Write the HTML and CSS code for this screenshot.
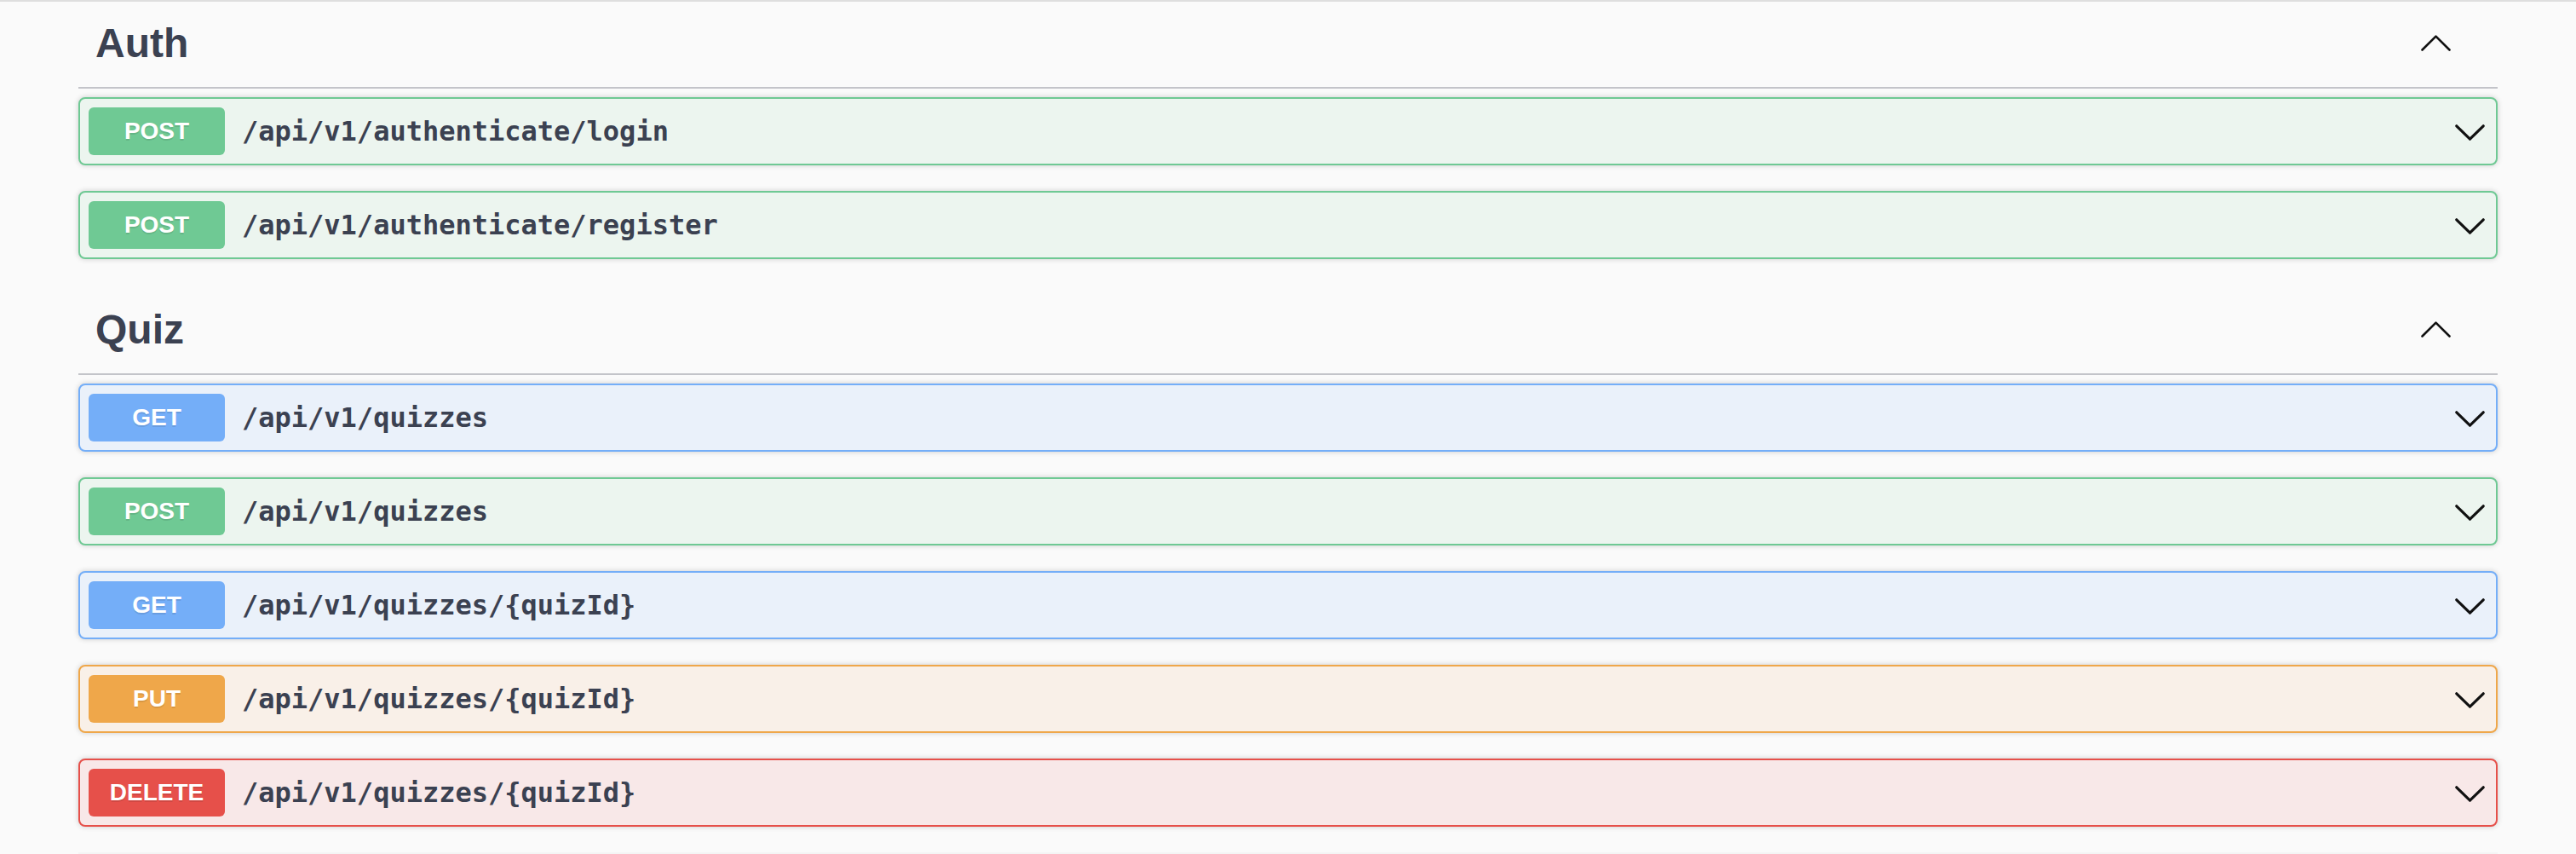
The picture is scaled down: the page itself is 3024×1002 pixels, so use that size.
FILE: index.html
```html
<!DOCTYPE html>
<html lang="en">
<head>
<meta charset="utf-8">
<title>API</title>
<link rel="stylesheet" href="styles.css">
</head>
<body>
<div class="wrapper">
  <section class="tag-section">
    <div class="tag tag-first">
      <h3 class="tag-title">Auth</h3>
      <svg class="tag-arrow" width="35" height="19" viewBox="0 0 35 19"><polyline points="1.5,17.5 17.5,1.6 33.5,17.5"/></svg>
    </div>
    <div class="ops">
      <div class="op op-post"><span class="method">POST</span><span class="path">/api/v1/authenticate/login</span><svg class="op-arrow" width="35" height="19" viewBox="0 0 35 19"><polyline points="1.8,1.8 17.5,17.2 33.2,1.8"/></svg></div>
      <div class="op op-post"><span class="method">POST</span><span class="path">/api/v1/authenticate/register</span><svg class="op-arrow" width="35" height="19" viewBox="0 0 35 19"><polyline points="1.8,1.8 17.5,17.2 33.2,1.8"/></svg></div>
    </div>
  </section>
  <section class="tag-section">
    <div class="tag">
      <h3 class="tag-title">Quiz</h3>
      <svg class="tag-arrow" width="35" height="19" viewBox="0 0 35 19"><polyline points="1.5,17.5 17.5,1.6 33.5,17.5"/></svg>
    </div>
    <div class="ops">
      <div class="op op-get"><span class="method">GET</span><span class="path">/api/v1/quizzes</span><svg class="op-arrow" width="35" height="19" viewBox="0 0 35 19"><polyline points="1.8,1.8 17.5,17.2 33.2,1.8"/></svg></div>
      <div class="op op-post"><span class="method">POST</span><span class="path">/api/v1/quizzes</span><svg class="op-arrow" width="35" height="19" viewBox="0 0 35 19"><polyline points="1.8,1.8 17.5,17.2 33.2,1.8"/></svg></div>
      <div class="op op-get"><span class="method">GET</span><span class="path">/api/v1/quizzes/{quizId}</span><svg class="op-arrow" width="35" height="19" viewBox="0 0 35 19"><polyline points="1.8,1.8 17.5,17.2 33.2,1.8"/></svg></div>
      <div class="op op-put"><span class="method">PUT</span><span class="path">/api/v1/quizzes/{quizId}</span><svg class="op-arrow" width="35" height="19" viewBox="0 0 35 19"><polyline points="1.8,1.8 17.5,17.2 33.2,1.8"/></svg></div>
      <div class="op op-delete"><span class="method">DELETE</span><span class="path">/api/v1/quizzes/{quizId}</span><svg class="op-arrow" width="35" height="19" viewBox="0 0 35 19"><polyline points="1.8,1.8 17.5,17.2 33.2,1.8"/></svg></div>
    </div>
  </section>
  <div class="next-block"></div>
</div>
</body>
</html>
```

FILE: styles.css
```css
html, body {
  margin: 0;
  padding: 0;
}
body {
  background: #fafafa;
  border-top: 2px solid #dedede;
  font-family: "Liberation Sans", Arial, sans-serif;
  color: #3b4151;
}
.wrapper {
  max-width: 2840px;
  margin: 0 auto;
}
.tag-section {
  display: flex;
  flex-direction: column;
}
.tag {
  display: flex;
  align-items: center;
  justify-content: space-between;
  height: 64px;
  padding: 20px 55px 20px 20px;
  border-bottom: 2px solid #c3c4c9;
  margin-bottom: 10px;
}
.tag-first {
  padding-top: 16px;
}
.tag-title {
  margin: 0;
  font-size: 48px;
  font-weight: 700;
  color: #3b4151;
  font-family: "Liberation Sans", Arial, sans-serif;
}
.tag-arrow polyline {
  fill: none;
  stroke: #111;
  stroke-width: 2.6;
  stroke-linecap: round;
  stroke-linejoin: round;
}
.ops {
  display: flex;
  flex-direction: column;
}
.op {
  display: flex;
  align-items: center;
  height: 56px;
  padding: 10px;
  border: 2px solid;
  border-radius: 8px;
  box-shadow: 0 0 6px rgba(0, 0, 0, 0.19);
  margin-bottom: 30px;
}
.method {
  width: 160px;
  height: 56px;
  display: flex;
  align-items: center;
  justify-content: center;
  border-radius: 6px;
  color: #fff;
  font-size: 28px;
  font-weight: 700;
  text-shadow: 0 2px 0 rgba(0, 0, 0, 0.1);
  flex-shrink: 0;
}
.path {
  flex: 1;
  padding: 0 20px;
  font-family: "DejaVu Sans Mono", "Liberation Mono", monospace;
  font-size: 32px;
  font-weight: 700;
  color: #3b4151;
}
.op-arrow {
  margin-right: 3px;
  margin-top: 2px;
}
.op-arrow polyline {
  fill: none;
  stroke: #111;
  stroke-width: 3.2;
  stroke-linecap: round;
  stroke-linejoin: round;
}
.op-post {
  background: #ecf5ef;
  border-color: #6fc994;
}
.op-post .method { background: #6fc994; }
.op-get {
  background: #eaf1fa;
  border-color: #74aef8;
}
.op-get .method { background: #74aef8; }
.op-put {
  background: #f9f0e8;
  border-color: #efa74a;
}
.op-put .method { background: #efa74a; }
.op-delete {
  background: #f8e8e8;
  border-color: #e6504a;
}
.op-delete .method { background: #e6504a; }
.next-block {
  height: 40px;
  background: #f4f4f4;
}
```
